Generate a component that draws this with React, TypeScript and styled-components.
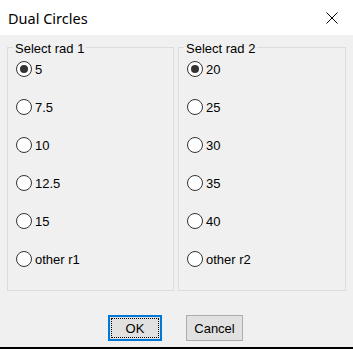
import React from "react";
import styled, { createGlobalStyle } from "styled-components";

const Global = createGlobalStyle`
  html, body { margin: 0; padding: 0; }
  body { background: #f0f0f0; font-family: "Liberation Sans", Arial, sans-serif; }
`;

const Window = styled.div`
  width: 353px;
  height: 349px;
  display: flex;
  flex-direction: column;
  background: #f0f0f0;
  overflow: hidden;
`;

const TitleBar = styled.div`
  height: 35px;
  flex: none;
  background: #ffffff;
  display: flex;
  align-items: center;
  justify-content: space-between;
  padding: 0 15px 0 8px;
  box-sizing: border-box;
`;

const Title = styled.span`
  font-family: "Noto Sans", "Open Sans", sans-serif;
  font-size: 14.5px;
  color: #000;
  line-height: 20px;
`;

const Body = styled.div`
  flex: 1;
  display: flex;
  flex-direction: column;
  padding: 12px 0 0 7px;
  box-sizing: border-box;
`;

const Groups = styled.div`
  display: flex;
  gap: 4px;
`;

const Group = styled.div<{ $w: number }>`
  position: relative;
  width: ${(p) => p.$w}px;
  height: 244px;
  box-sizing: border-box;
  border: 1px solid #dcdcdc;
  padding: 13px 0 0 8px;
  display: flex;
  flex-direction: column;
  gap: 22px;
`;

const Legend = styled.span`
  position: absolute;
  top: -7px;
  left: 5px;
  padding: 0 2px;
  background: #f0f0f0;
  font-size: 13px;
  line-height: 15px;
  color: #000;
`;

const Row = styled.label`
  display: flex;
  align-items: center;
  height: 16px;
  gap: 3px;
  font-size: 13px;
  color: #000;
`;

const Radio = styled.span<{ $on?: boolean }>`
  width: 16px;
  height: 16px;
  box-sizing: border-box;
  border-radius: 50%;
  border: 1px solid #333333;
  background: #ffffff;
  display: flex;
  align-items: center;
  justify-content: center;
  &::after {
    content: "";
    display: ${(p) => (p.$on ? "block" : "none")};
    width: 8px;
    height: 8px;
    border-radius: 50%;
    background: #333333;
  }
`;

const Buttons = styled.div`
  display: flex;
  justify-content: center;
  gap: 24px;
  margin-top: 24px;
  padding-right: 9px;
`;

const Button = styled.button<{ $w: number; $default?: boolean }>`
  width: ${(p) => p.$w}px;
  height: 26px;
  box-sizing: border-box;
  background: #e1e1e1;
  border: ${(p) => (p.$default ? "2px solid #0078d7" : "1px solid #adadad")};
  padding: 0;
  margin: 0;
  font-family: "Liberation Sans", Arial, sans-serif;
  font-size: 13px;
  color: #000;
  display: flex;
  align-items: center;
  justify-content: center;
  position: relative;
  outline: none;
`;

const Focus = styled.span`
  position: absolute;
  inset: 1px;
  border: 1px dotted #000;
`;

const BottomEdge = styled.div`
  height: 2px;
  flex: none;
  background: #000;
`;

const r1 = ["5", "7.5", "10", "12.5", "15", "other r1"];
const r2 = ["20", "25", "30", "35", "40", "other r2"];

export default function App() {
  return (
    <>
      <Global />
      <Window>
        <TitleBar>
          <Title>Dual Circles</Title>
          <svg width="12" height="12" viewBox="0 0 12 12">
            <path d="M0.5 0.5 L11.5 11.5 M11.5 0.5 L0.5 11.5" stroke="#000" strokeWidth="1" fill="none" />
          </svg>
        </TitleBar>
        <Body>
          <Groups>
            <Group $w={167}>
              <Legend>Select rad 1</Legend>
              {r1.map((v, i) => (
                <Row key={v}>
                  <Radio $on={i === 0} />
                  {v}
                </Row>
              ))}
            </Group>
            <Group $w={168}>
              <Legend>Select rad 2</Legend>
              {r2.map((v, i) => (
                <Row key={v}>
                  <Radio $on={i === 0} />
                  {v}
                </Row>
              ))}
            </Group>
          </Groups>
          <Buttons>
            <Button $w={54} $default>
              <Focus />
              OK
            </Button>
            <Button $w={57}>Cancel</Button>
          </Buttons>
        </Body>
        <BottomEdge />
      </Window>
    </>
  );
}
